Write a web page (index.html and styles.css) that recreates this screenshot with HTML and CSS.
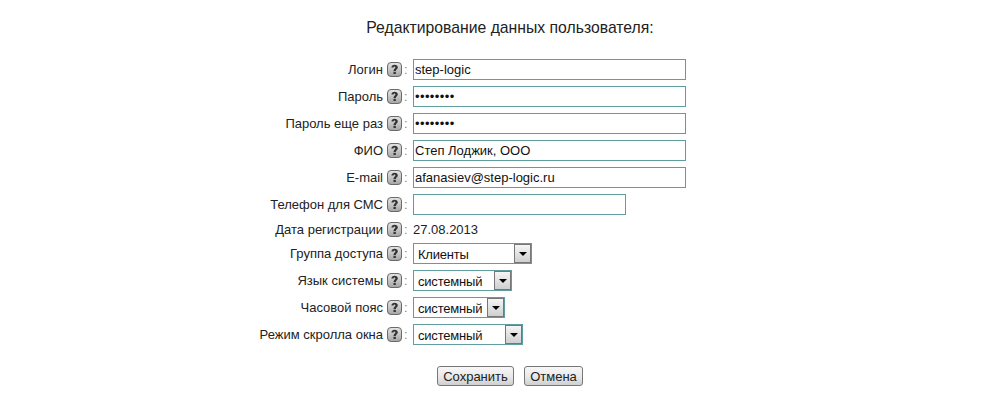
FILE: index.html
```html
<!DOCTYPE html>
<html lang="ru">
<head>
<meta charset="utf-8">
<title>Редактирование данных пользователя</title>
<link rel="stylesheet" href="styles.css">
</head>
<body>
<svg class="defs" width="0" height="0" aria-hidden="true">
  <defs>
    <linearGradient id="hg" x1="0" y1="0" x2="0" y2="1"><stop offset="0" stop-color="#e6e6e6"/><stop offset="1" stop-color="#a4a4a4"/></linearGradient>
    <symbol id="help" viewBox="0 0 15 15">
      <rect x="0.5" y="0.5" width="14" height="14" rx="3.5" fill="url(#hg)" stroke="#6a6a6a"/>
      <path d="M4.4 5.6C4.5 3.7 5.9 2.8 7.6 2.8C9.5 2.8 10.8 3.9 10.8 5.4C10.8 7.1 8.9 7.4 8.8 9H6.5C6.5 6.8 8.4 6.5 8.4 5.5C8.4 4.9 8 4.6 7.5 4.6C6.9 4.6 6.6 5 6.6 5.6Z" fill="#333"/>
      <rect x="6.5" y="9.8" width="2.3" height="2.2" fill="#333"/>
    </symbol>
  </defs>
</svg>
<main class="page">
  <h1 class="title">Редактирование данных пользователя:</h1>
  <form class="form">
    <div class="row"><label class="label">Логин</label><svg class="help"><use href="#help"/></svg><span class="colon">:</span><input class="field wide" type="text" value="step-logic"></div>
    <div class="row"><label class="label">Пароль</label><svg class="help"><use href="#help"/></svg><span class="colon">:</span><input class="field wide pass" type="password" value="12345678"></div>
    <div class="row"><label class="label">Пароль еще раз</label><svg class="help"><use href="#help"/></svg><span class="colon">:</span><input class="field wide pass" type="password" value="12345678"></div>
    <div class="row"><label class="label">ФИО</label><svg class="help"><use href="#help"/></svg><span class="colon">:</span><input class="field wide" type="text" value="Степ Лоджик, ООО"></div>
    <div class="row"><label class="label">E-mail</label><svg class="help"><use href="#help"/></svg><span class="colon">:</span><input class="field wide" type="text" value="afanasiev@step-logic.ru"></div>
    <div class="row"><label class="label">Телефон для СМС</label><svg class="help"><use href="#help"/></svg><span class="colon">:</span><input class="field phone" type="text"></div>
    <div class="row short"><label class="label">Дата регистрации</label><svg class="help"><use href="#help"/></svg><span class="colon">:</span><span class="value">27.08.2013</span></div>
    <div class="row"><label class="label">Группа доступа</label><svg class="help"><use href="#help"/></svg><span class="colon">:</span><div class="select s119"><span class="sel-text">Клиенты</span><span class="arrow"><i></i></span></div></div>
    <div class="row"><label class="label">Язык системы</label><svg class="help"><use href="#help"/></svg><span class="colon">:</span><div class="select s99"><span class="sel-text">системный</span><span class="arrow"><i></i></span></div></div>
    <div class="row"><label class="label">Часовой пояс</label><svg class="help"><use href="#help"/></svg><span class="colon">:</span><div class="select s92"><span class="sel-text">системный</span><span class="arrow"><i></i></span></div></div>
    <div class="row"><label class="label">Режим скролла окна</label><svg class="help"><use href="#help"/></svg><span class="colon">:</span><div class="select s110"><span class="sel-text">системный</span><span class="arrow"><i></i></span></div></div>
    <div class="actions">
      <button class="btn save" type="button">Сохранить</button>
      <button class="btn cancel" type="button">Отмена</button>
    </div>
  </form>
</main>
</body>
</html>
```
FILE: styles.css
```css
html, body { margin: 0; padding: 0; background: #fff; }
body { font-family: "Liberation Sans", Arial, sans-serif; font-size: 13px; color: #222; }
.defs { display: block; height: 0; }
.page { width: 999px; height: 402px; overflow: hidden; }
.title { margin: 0; padding: 19px 0 0 21px; font-size: 15.75px; font-weight: 400; line-height: 18px; text-align: center; color: #222; }
.form { padding-top: 22px; }
.row { display: flex; align-items: center; height: 21px; margin-bottom: 6px; }
.row.short { height: 16px; }
.label { width: 383px; text-align: right; flex: none; line-height: 15px; }
.help { width: 15px; height: 15px; margin-left: 4px; flex: none; }
.colon { width: 11px; padding-left: 2px; box-sizing: border-box; flex: none; color: #a08a30; }
.field { box-sizing: border-box; height: 21px; border: 1px solid #5f9ea0; padding: 0 1px; margin: 0; font: 13px "Liberation Sans", Arial, sans-serif; color: #111; outline: none; background: #fff; }
.pass { letter-spacing: 0.4px; }
.wide { width: 273px; }
.phone { width: 213px; }
.select { box-sizing: border-box; height: 21px; display: flex; align-items: stretch; border: 1px solid #5f9ea0; background: #fff; }
.s119 { width: 119px; }
.s99 { width: 99px; }
.s92 { width: 92px; }
.s110 { width: 110px; }
.sel-text { flex: 1; padding: 1px 0 0 4px; line-height: 20px; letter-spacing: -0.2px; color: #111; overflow: hidden; white-space: nowrap; }
.arrow { width: 17px; flex: none; box-sizing: border-box; border: 1px solid #777; background: linear-gradient(#f5f5f5, #cfcfcf); display: flex; align-items: center; justify-content: center; }
.arrow i { display: block; width: 0; height: 0; border-left: 4px solid transparent; border-right: 4px solid transparent; border-top: 4px solid #000; }
.actions { display: flex; justify-content: center; gap: 10px; padding: 15px 0 0 21px; }
.btn { box-sizing: border-box; height: 20px; padding: 0; border: 1px solid #777; border-radius: 3px; background: linear-gradient(#f7f7f7 0%, #e8e8e8 55%, #cfcfcf 100%); font: 13px "Liberation Sans", Arial, sans-serif; color: #222; }
.save { width: 77px; }
.cancel { width: 59px; }
```
